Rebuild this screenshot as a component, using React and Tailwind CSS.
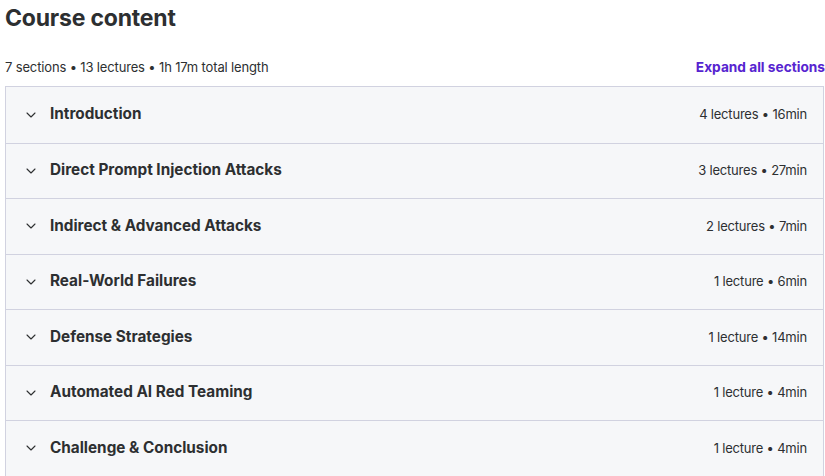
import { ChevronDown } from "lucide-react";

const sections = [
  { title: "Introduction", meta: "4 lectures • 16min" },
  { title: "Direct Prompt Injection Attacks", meta: "3 lectures • 27min" },
  { title: "Indirect & Advanced Attacks", meta: "2 lectures • 7min" },
  { title: "Real-World Failures", meta: "1 lecture • 6min" },
  { title: "Defense Strategies", meta: "1 lecture • 14min" },
  { title: "Automated AI Red Teaming", meta: "1 lecture • 4min" },
  { title: "Challenge & Conclusion", meta: "1 lecture • 4min" },
];

const App = () => {
  return (
    <div
      className="w-[825px] h-[476px] overflow-hidden bg-white text-[#2d2f31] pl-[5px]"
      style={{ fontFamily: "Inter, 'Noto Sans', sans-serif" }}
    >
      <h2 className="text-[23px] font-bold leading-[36px] tracking-[-0.2px]">Course content</h2>

      <div className="flex items-end justify-between mt-[21px] mb-[9px]">
        <span className="text-[13px] leading-[20px] tracking-[-0.15px]">
          7 sections • 13 lectures • 1h 17m total length
        </span>
        <button className="text-[13.7px] font-bold text-[#5624d0] leading-[20px]">
          Expand all sections
        </button>
      </div>

      <div className="w-[819px] border border-[#d1d2e0] bg-[#f6f7f9]">
        {sections.map((s, i) => (
          <div
            key={i}
            className={
              "flex items-center h-[55.5px] pl-[17px] pr-[16px] " +
              (i > 0 ? "border-t border-[#d1d2e0]" : "")
            }
          >
            <ChevronDown className="w-[16px] h-[16px] text-[#2d2f31] mr-[11px]" strokeWidth={1.6} />
            <span className="flex-1 text-[15.3px] font-bold">{s.title}</span>
            <span className="text-[13px] tracking-[-0.2px]">{s.meta}</span>
          </div>
        ))}
      </div>
    </div>
  );
};

export default App;
